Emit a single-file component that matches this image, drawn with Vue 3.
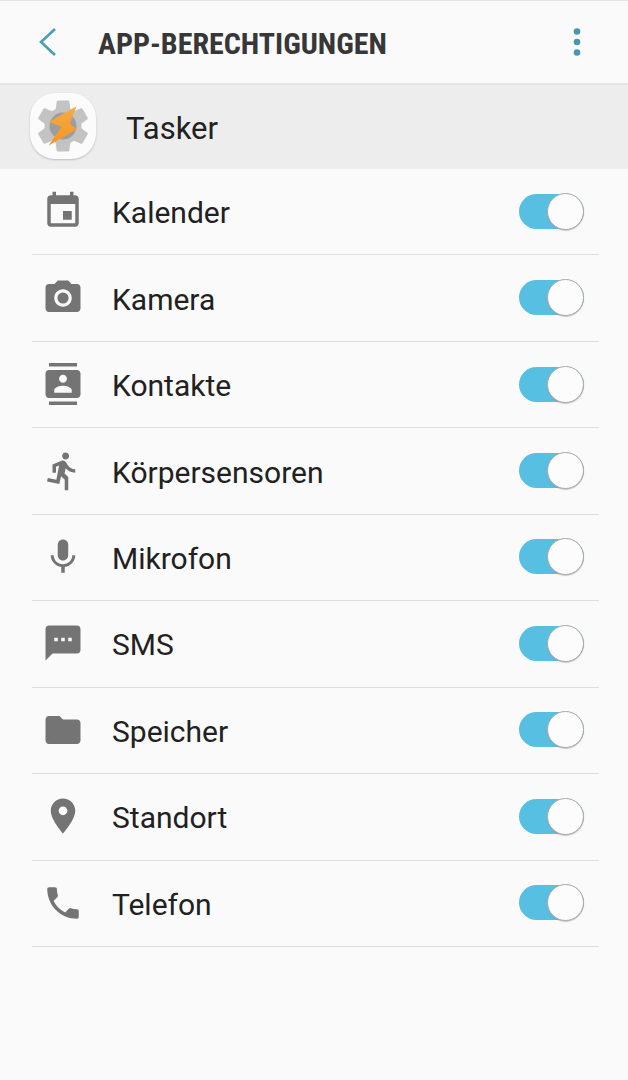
<script setup>
import { reactive } from 'vue'

const permissions = reactive([
  { id: 'calendar', label: 'Kalender', on: true, path: 'M17 12h-5v5h5v-5zM16 1v2H8V1H6v2H5c-1.11 0-1.99.9-1.99 2L3 19c0 1.1.89 2 2 2h14c1.1 0 2-.9 2-2V5c0-1.1-.9-2-2-2h-1V1h-2zm3 18H5V8h14v11z' },
  { id: 'camera', label: 'Kamera', on: true, path: 'M12 8.8a3.2 3.2 0 1 0 0 6.4 3.2 3.2 0 1 0 0-6.4zM9 2L7.17 4H4c-1.1 0-2 .9-2 2v12c0 1.1.9 2 2 2h16c1.1 0 2-.9 2-2V6c0-1.1-.9-2-2-2h-3.17L15 2H9zm3 15c-2.76 0-5-2.24-5-5s2.24-5 5-5 5 2.24 5 5-2.24 5-5 5z' },
  { id: 'contacts', label: 'Kontakte', on: true, path: 'M20 0H4v2h16V0zM4 24h16v-2H4v2zM20 4H4c-1.1 0-2 .9-2 2v12c0 1.1.9 2 2 2h16c1.1 0 2-.9 2-2V6c0-1.1-.9-2-2-2zm-8 2.75c1.24 0 2.25 1.01 2.25 2.25s-1.01 2.25-2.25 2.25S9.75 10.24 9.75 9 10.76 6.75 12 6.75zM17 17H7v-1.5c0-1.67 3.33-2.5 5-2.5s5 .83 5 2.5V17z' },
  { id: 'sensors', label: 'Körpersensoren', on: true, path: 'M13.49 5.48c1.1 0 2-.9 2-2s-.9-2-2-2-2 .9-2 2 .9 2 2 2zm-3.6 13.9l1-4.4 2.1 2v6h2v-7.5l-2.1-2 .6-3c1.3 1.5 3.3 2.5 5.5 2.5v-2c-1.9 0-3.5-1-4.3-2.4l-1-1.6c-.4-.6-1-1-1.7-1-.3 0-.5.1-.8.1l-5.2 2.2v4.7h2v-3.4l1.8-.7-1.6 8.1-4.9-1-.4 2 7 1.4z' },
  { id: 'microphone', label: 'Mikrofon', on: true, path: 'M12 14c1.66 0 2.99-1.34 2.99-3L15 5c0-1.66-1.34-3-3-3S9 3.34 9 5v6c0 1.66 1.34 3 3 3zm5.3-3c0 3-2.54 5.1-5.3 5.1S6.7 14 6.7 11H5c0 3.41 2.72 6.23 6 6.72V21h2v-3.28c3.28-.48 6-3.3 6-6.72h-1.7z' },
  { id: 'sms', label: 'SMS', on: true, path: 'M20 2H4c-1.1 0-1.99.9-1.99 2L2 22l4-4h14c1.1 0 2-.9 2-2V4c0-1.1-.9-2-2-2zM9 11H7V9h2v2zm4 0h-2V9h2v2zm4 0h-2V9h2v2z' },
  { id: 'storage', label: 'Speicher', on: true, path: 'M10 4H4c-1.1 0-1.99.9-1.99 2L2 18c0 1.1.9 2 2 2h16c1.1 0 2-.9 2-2V8c0-1.1-.9-2-2-2h-8l-2-2z' },
  { id: 'location', label: 'Standort', on: true, path: 'M12 2C8.13 2 5 5.13 5 9c0 5.25 7 13 7 13s7-7.75 7-13c0-3.87-3.13-7-7-7zm0 9.5c-1.38 0-2.5-1.12-2.5-2.5s1.12-2.5 2.5-2.5 2.5 1.12 2.5 2.5-1.12 2.5-2.5 2.5z' },
  { id: 'phone', label: 'Telefon', on: true, path: 'M6.62 10.79c1.44 2.83 3.76 5.14 6.59 6.59l2.2-2.2c.27-.27.67-.36 1.02-.24 1.12.37 2.33.57 3.57.57.55 0 1 .45 1 1V20c0 .55-.45 1-1 1-9.39 0-17-7.61-17-17 0-.55.45-1 1-1h3.5c.55 0 1 .45 1 1 0 1.25.2 2.45.57 3.57.11.35.03.74-.25 1.02l-2.2 2.2z' },
])
</script>

<template>
  <div class="screen">
    <header class="bar">
      <button class="icon-button" type="button" aria-label="Zurück">
        <svg width="20" height="30" viewBox="0 0 20 30" aria-hidden="true">
          <path d="M17 2L3 15L17 28" fill="none" stroke="#4c9db5" stroke-width="2.6" />
        </svg>
      </button>
      <h1 class="title">APP-BERECHTIGUNGEN</h1>
      <button class="icon-button" type="button" aria-label="Weitere Optionen">
        <svg width="10" height="30" viewBox="0 0 10 30" aria-hidden="true" fill="#4a97ad">
          <circle cx="5" cy="4.500" r="3.3" />
          <circle cx="5" cy="15" r="3.3" />
          <circle cx="5" cy="25.500" r="3.3" />
        </svg>
      </button>
    </header>

    <section class="app">
      <span class="app-icon">
        <svg width="66" height="66" viewBox="0 0 66 66" aria-hidden="true">
          <defs>
            <linearGradient id="bolt" x1="0" y1="0" x2="0" y2="1">
              <stop offset="0" stop-color="#f3ab45" />
              <stop offset="1" stop-color="#fb9420" />
            </linearGradient>
          </defs>
          <g fill="#c3c3c3">
            <circle cx="33" cy="33" r="18.500" />
            <path id="tooth" d="M27.800 7.500h10.400q1 0 1.100 1l1.200 9v31l-1.200 9q-.1 1-1.100 1h-10.400q-1 0-1.100-1l-1.200-9v-31l1.200-9q.1-1 1.100-1z" />
            <use href="#tooth" transform="rotate(60 33 33)" />
            <use href="#tooth" transform="rotate(120 33 33)" />
          </g>
          <circle cx="33" cy="33" r="13.500" fill="#9d9d9d" />
          <path d="M46.500 13.200L19.300 28.800L31.500 33.700L18.700 52.500L46.700 36.200L39.800 30.500z" fill="url(#bolt)" />
        </svg>
      </span>
      <h2 class="app-name">Tasker</h2>
    </section>

    <ul class="list">
      <li v-for="item in permissions" :key="item.id">
        <label class="row" :for="item.id">
          <svg class="glyph" viewBox="0 0 24 24" aria-hidden="true"><path :d="item.path" /></svg>
          <span class="name">{{ item.label }}</span>
          <input :id="item.id" v-model="item.on" class="switch" type="checkbox" role="switch" />
        </label>
      </li>
    </ul>
  </div>
</template>

<style>
body {
  background: #fafafa;
}
</style>

<style scoped>
.screen {
  min-height: 100vh;
  box-sizing: border-box;
  border-top: 1px solid #e6e6e6;
  background: #fafafa;
  color: #212121;
  font-family: Roboto, "Liberation Sans", sans-serif;
}
.bar {
  display: flex;
  align-items: center;
  height: 82px;
  padding: 0 40px 0 32px;
}
.icon-button {
  display: flex;
  justify-content: center;
  padding: 6px;
  border: 0;
  background: none;
}
.title {
  flex: 1;
  margin: 0 0 0 34px;
  padding-top: 4px;
  color: #373737;
  font: bold 30px/36px "Roboto Condensed", "Liberation Sans Narrow", Roboto, sans-serif;
  white-space: nowrap;
}
.app {
  display: flex;
  align-items: center;
  gap: 30px;
  height: 82px;
  padding: 0 30px 2px;
  border-top: 2px solid #e4e4e4;
  background: #ededed;
}
.app-icon {
  display: flex;
  border-radius: 25px;
  background: #fbfbfb;
  box-shadow: 0 1px 2px #bdbdbd;
}
.app-name {
  margin: 0;
  padding-top: 6px;
  font-size: 31px;
  font-weight: 400;
  line-height: 36px;
}
.list {
  display: grid;
  grid-auto-rows: 1fr;
  min-height: 778px;
  margin: 0;
  padding: 0 29px 0 32px;
  list-style: none;
}
.list li {
  display: grid;
  border-bottom: 1px solid #dedede;
}
.row {
  display: flex;
  align-items: center;
  padding: 0 15px 1px 10px;
}
.glyph {
  width: 42px;
  height: 42px;
  fill: #747474;
}
.name {
  flex: 1;
  padding: 4px 0 0 28px;
  font-size: 30px;
  line-height: 36px;
}
.switch {
  display: flex;
  justify-content: flex-end;
  align-items: center;
  box-sizing: border-box;
  width: 65px;
  height: 35px;
  margin: 0;
  border-radius: 18px;
  appearance: none;
  background: #c4c4c4;
}
.switch::before {
  content: "";
  box-sizing: border-box;
  width: 37px;
  height: 37px;
  border: 1px solid #a9a9a9;
  border-radius: 50%;
  background: #fcfcfc;
  box-shadow: 0 1px 1px #9a9a9a88;
}
.switch:checked {
  background: #56bfe2;
}
.switch:not(:checked) {
  justify-content: flex-start;
}
</style>
